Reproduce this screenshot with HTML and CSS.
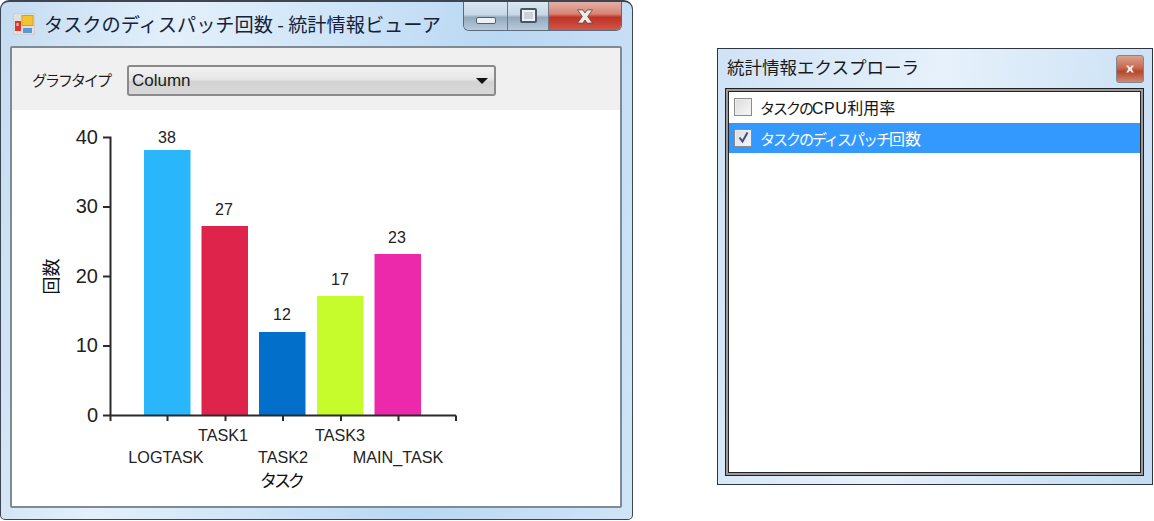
FILE: index.html
```html
<!DOCTYPE html>
<html lang="ja">
<head>
    <meta charset="UTF-8">
    <meta name="viewport" content="width=device-width, initial-scale=1.0">
    <title>統計情報ビューア</title>
    <link rel="stylesheet" href="styles.css">
</head>
<body>
    <div class="page">
        <!-- グラフのウィンドウ -->
        <section class="viewer">
            <header class="viewer-title">
                <svg class="app-icon" width="22" height="22" viewBox="0 0 22 22">
                    <rect x="0.5" y="0.5" width="21" height="21" fill="#dfdfdf" stroke="#cfcfcf"/>
                    <rect x="2" y="8" width="6" height="10" fill="#d8382c"/>
                    <rect x="3.5" y="10" width="2" height="3" fill="#f6c5bd"/>
                    <rect x="9" y="2.500" width="11" height="10" fill="#f4c430" stroke="#d79f1e"/>
                    <rect x="10" y="15" width="9" height="5" fill="#5a96d8"/>
                </svg>
                <h1 class="viewer-name">タスクのディスパッチ回数 - 統計情報ビューア</h1>
                <div class="caption-buttons">
                    <div class="caption-btn caption-min"><span class="min-glyph"></span></div>
                    <div class="caption-btn caption-max"><span class="max-glyph"></span></div>
                    <div class="caption-btn caption-close">
                        <svg width="20" height="15" viewBox="0 0 22 17">
                            <path d="M2.500 1h6l2.500 3.500L13.500 1h6l-5.500 7.500 5.500 7.500h-6L11 12.500 8.500 16h-6L8 8.500z" fill="#f1ecec" stroke="#6f4644" stroke-width="1"/>
                        </svg>
                    </div>
                </div>
            </header>
            <div class="viewer-client">
                <div class="toolbar">
                    <span class="toolbar-label">グラフタイプ</span>
                    <div class="combo">
                        <span>Column</span>
                        <span class="combo-arrow"></span>
                    </div>
                </div>
                <div class="chart-area">
                    <svg class="chart" width="608" height="395" viewBox="12 110 608 395">
                        <g class="bars">
                            <rect x="144" y="150" width="46.5" height="265" fill="#29b6fb"/>
                            <rect x="201.500" y="226" width="46.500" height="189" fill="#de244b"/>
                            <rect x="259" y="332" width="46.500" height="83" fill="#026fcb"/>
                            <rect x="317" y="296" width="46.500" height="119" fill="#c6fb2c"/>
                            <rect x="374.500" y="254" width="46.500" height="161" fill="#ec29aa"/>
                        </g>
                        <path class="axis" d="M103 137.500H110.500V415M103 207H110M103 276.500H110M103 346H110M103 415.500H456M110.500 415.500V421M167.500 415.500V421M225.500 415.500V421M283 415.500V421M341 415.500V421M398.500 415.500V421M456 415.500V421"/>
                        <g class="y-labels">
                            <text x="98" y="144">40</text>
                            <text x="98" y="213">30</text>
                            <text x="98" y="283">20</text>
                            <text x="98" y="352">10</text>
                            <text x="98" y="422">0</text>
                        </g>
                        <g class="values">
                            <text x="167" y="143">38</text>
                            <text x="224" y="215">27</text>
                            <text x="282" y="320">12</text>
                            <text x="340" y="285">17</text>
                            <text x="397" y="243">23</text>
                        </g>
                        <g class="x-labels">
                            <text x="166" y="463">LOGTASK</text>
                            <text x="223" y="441">TASK1</text>
                            <text x="283" y="463">TASK2</text>
                            <text x="340" y="441">TASK3</text>
                            <text x="398" y="463">MAIN_TASK</text>
                        </g>
                        <text class="axis-title axis-title-x" x="281" y="487">タスク</text>
                        <text class="axis-title axis-title-y" transform="translate(58 276.500) rotate(-90)">回数</text>
                    </svg>
                </div>
            </div>
        </section>

        <!-- エクスプローラ -->
        <section class="explorer">
            <header class="explorer-title">
                <h2 class="explorer-name">統計情報エクスプローラ</h2>
                <div class="tool-close">
                    <svg width="10" height="8" viewBox="0 0 10 8">
                        <path d="M1 0.500h2.300l1.700 2 1.700-2H9L6.500 4 9 7.500H6.700L5 5.500l-1.700 2H1L3.500 4z" fill="#f4eeee"/>
                    </svg>
                </div>
            </header>
            <div class="explorer-frame">
                <ul class="stat-list">
                    <li class="stat-row">
                        <span class="check"></span>
                        <span><span class="kana">タスクの</span><span class="latin">CPU</span>利用率</span>
                    </li>
                    <li class="stat-row stat-row-selected">
                        <span class="check">
                            <svg width="13" height="13" viewBox="0 0 13 13">
                                <path d="M2.500 6.500l3 4 5-9" fill="none" stroke="#3a4a8c" stroke-width="2"/>
                            </svg>
                        </span>
                        <span><span class="kana">タスクのディスパッチ</span>回数</span>
                    </li>
                </ul>
            </div>
        </section>
    </div>
</body>
</html>
```

FILE: styles.css
```css
* {
    box-sizing: border-box;
}
body {
    margin: 0;
    padding: 0;
    background-color: #fff;
    font-family: "Noto Sans CJK JP", "Liberation Sans", sans-serif;
    color: #1a1a1a;
}
.page {
    display: flex;
    align-items: flex-start;
    width: 1154px;
    height: 521px;
    overflow: hidden;
}

/* グラフのウィンドウ */
.viewer {
    display: flex;
    flex-direction: column;
    width: 633px;
    height: 520px;
    padding: 0 10px 11px 9px;
    border: 1px solid #3d4650;
    border-top-width: 2px;
    border-radius: 9px 9px 5px 5px;
    background: linear-gradient(100deg, #c4dcf1 0%, #e3f0fb 25%, #b9d8f3 70%, #cfe4f7 100%);
}
.viewer-title {
    display: flex;
    align-items: flex-start;
    height: 44px;
    flex-shrink: 0;
}
.app-icon {
    margin: 11px 0 0 3px;
}
.viewer-name {
    margin: 7px 0 0 9px;
    font-size: 19.200px;
    line-height: 30px;
    font-weight: 400;
    white-space: nowrap;
    color: #15233a;
}
.caption-buttons {
    display: flex;
    height: 29px;
    margin-left: auto;
    border: 1px solid #5b6a7b;
    border-top: none;
    border-radius: 0 0 6px 6px;
    overflow: hidden;
}
.caption-btn {
    display: flex;
    align-items: center;
    justify-content: center;
    height: 100%;
}
.caption-min,
.caption-max {
    background: linear-gradient(#dbe8f3 0%, #c8d8e6 45%, #93a8bc 55%, #b8cbdc 100%);
    border-right: 1px solid #6c7a88;
}
.caption-min {
    width: 44px;
}
.caption-max {
    width: 41px;
}
.caption-close {
    width: 72px;
    background: linear-gradient(#e3b0a6 0%, #d98474 42%, #bf3224 55%, #d0584a 100%);
}
.min-glyph {
    display: block;
    width: 20px;
    height: 7px;
    margin-top: 8px;
    background: #eef1f4;
    border: 1px solid #54606d;
    border-radius: 2px;
}
.max-glyph {
    display: block;
    width: 17px;
    height: 15px;
    margin-top: -1px;
    background: #c9d3dd;
    border: 2px solid #4a5664;
    border-radius: 2px;
    box-shadow: inset 0 0 0 2px #eef2f6;
}
.viewer-client {
    flex: 1;
    display: flex;
    flex-direction: column;
    border: 2px solid #7e8a96;
    border-radius: 2px;
    background: #fff;
}
.toolbar {
    display: flex;
    align-items: center;
    height: 62px;
    padding: 3px 0 0 20px;
    background: #f0f0f0;
    flex-shrink: 0;
}
.toolbar-label {
    width: 95px;
    margin-top: -2px;
    font-size: 15px;
    letter-spacing: -2px;
    color: #1c1c1c;
}
.combo {
    display: flex;
    align-items: center;
    justify-content: space-between;
    width: 369px;
    height: 31px;
    padding: 0 6px 0 3px;
    border: 2px solid #8a8a8a;
    border-radius: 3px;
    background: linear-gradient(#f2f2f2 0%, #e6e6e6 45%, #d2d2d2 55%, #d8d8d8 100%);
    font-family: "Liberation Sans", sans-serif;
    font-size: 17px;
}
.combo-arrow {
    width: 0;
    height: 0;
    border-left: 6px solid transparent;
    border-right: 6px solid transparent;
    border-top: 6px solid #111;
}
.chart-area {
    flex: 1;
    min-height: 0;
}
.chart {
    display: block;
}
.axis {
    fill: none;
    stroke: #2a2a2a;
    stroke-width: 2;
}
.y-labels text {
    font-family: "Liberation Sans", sans-serif;
    font-size: 20px;
    text-anchor: end;
    fill: #222;
}
.values text,
.x-labels text {
    font-family: "Liberation Sans", sans-serif;
    font-size: 16px;
    text-anchor: middle;
    fill: #222;
}
.x-labels text {
    font-size: 16.200px;
}
.axis-title {
    text-anchor: middle;
    fill: #111;
}
.axis-title-x {
    font-size: 17px;
    letter-spacing: -3px;
}
.axis-title-y {
    font-size: 18px;
}

/* エクスプローラ */
.explorer {
    display: flex;
    flex-direction: column;
    width: 436px;
    height: 437px;
    margin: 48px 0 0 84px;
    padding: 0 8px 8px 7px;
    border: 1px solid #2d3640;
    background: linear-gradient(100deg, #cfe3f6 0%, #e6f1fb 45%, #c3dcf3 100%);
}
.explorer-title {
    display: flex;
    align-items: flex-start;
    justify-content: space-between;
    height: 39px;
    flex-shrink: 0;
}
.explorer-name {
    margin: 5px 0 0 2px;
    font-size: 17.500px;
    line-height: 26px;
    font-weight: 400;
    color: #1a1a1a;
}
.tool-close {
    display: flex;
    align-items: center;
    justify-content: center;
    width: 28px;
    height: 28px;
    margin: 6px 0 0 0;
    border: 1px solid #7d8a96;
    border-radius: 3px;
    background: linear-gradient(#dba18f 0%, #c9694f 45%, #b5482c 60%, #d08a70 100%);
}
.explorer-frame {
    flex: 1;
    border: 1px solid #222;
    box-shadow: inset 0 0 0 2px #9a9a9a, inset 0 0 0 3px #222;
    padding: 3px;
    background: #fff;
}
.stat-list {
    list-style: none;
    margin: 0;
    padding: 0;
}
.stat-row {
    display: flex;
    align-items: center;
    gap: 8px;
    height: 30.500px;
    padding-left: 5px;
    font-size: 16px;
    color: #151515;
}
.kana {
    font-size: 15px;
    letter-spacing: -2px;
}
.latin {
    font-family: "Liberation Sans", sans-serif;
    font-size: 16px;
    letter-spacing: 0.500px;
}
.stat-row-selected {
    background: #3399ff;
    color: #fff;
}
.check {
    display: flex;
    align-items: center;
    justify-content: center;
    width: 18px;
    height: 18px;
    border: 1.500px solid #8b8b8b;
    background: linear-gradient(135deg, #dcdcdc, #f7f7f7);
    box-shadow: inset 0 0 0 1px #eee;
}
```
